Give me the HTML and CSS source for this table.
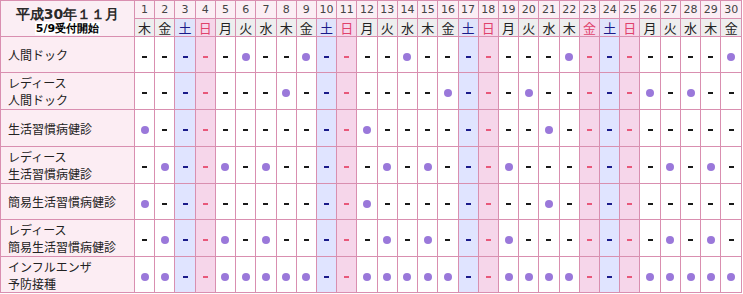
FILE: index.html
```html
<!DOCTYPE html>
<html lang="ja">
<head>
<meta charset="utf-8">
<title>平成30年11月</title>
<link rel="stylesheet" href="styles.css">
</head>
<body>
<table class="cal" id="cal">
  <thead>
    <tr class="nums" id="nums">
      <th class="corner" rowspan="2">
        <div class="month">平成30年１１月</div>
        <div class="start"><span>5/9受付開始</span></div>
      </th>
    </tr>
    <tr class="wdays" id="wdays"></tr>
  </thead>
  <tbody id="body"></tbody>
</table>
<script src="app.js"></script>
</body>
</html>
```

FILE: styles.css
```css
html, body {
  margin: 0;
  padding: 0;
  background: #ffffff;
}
body {
  font-family: "Noto Sans CJK JP", "Noto Sans", sans-serif;
  color: #222;
}
.cal {
  border-collapse: collapse;
  table-layout: fixed;
  width: 742px;
}
.cal th, .cal td {
  border: 1px solid #d98fb0;
  padding: 0;
  text-align: center;
  font-weight: normal;
}
.corner {
  width: 133px;
  background: #f2cbe0;
  vertical-align: top;
}
.month {
  font-size: 14px;
  line-height: 18px;
  font-weight: 700;
  color: #2a2a2a;
  margin-top: 4px;
}
.start {
  line-height: 12px;
  margin-top: 0;
}
.start span {
  font-size: 11px;
  font-weight: 700;
  background: #fff;
  color: #000;
  padding: 0 1px;
}
.nums th {
  height: 17px;
  font-family: "DejaVu Sans", sans-serif;
  font-size: 11px;
  line-height: 16px;
  background: #fbeef4;
  color: #444;
}
.wdays th {
  height: 17px;
  font-size: 13px;
  line-height: 16px;
  background: #eeeeee;
  color: #222;
}
.wdays th.sat {
  background: #e0e4fb;
  color: #1a1a8a;
}
.wdays th.sun {
  background: #f6d6e9;
  color: #e0426c;
}
.cal tbody td {
  background: #fff;
  font-size: 11px;
  color: #1a1a1a;
}
.cal tbody td.sat {
  background: #e0e4ff;
  color: #1a1a8a;
}
.cal tbody td.sun {
  background: #f6d6ea;
  color: #e8587a;
}
.cal tbody th.label {
  background: #fcedf3;
  text-align: left;
  padding-left: 7px;
  font-size: 12px;
  line-height: 17px;
  color: #222;
}
.row {
  height: 36px;
}
.row.tall {
  height: 37px;
}
.dot {
  display: inline-block;
  width: 8px;
  height: 8px;
  border-radius: 50%;
  background: #9a78da;
  vertical-align: middle;
}
.dash {
  display: inline-block;
  width: 5px;
  height: 2px;
  background: currentColor;
  vertical-align: middle;
}
```

FILE: app.js
```js
(function () {
  var wd = ["木","金","土","日","月","火","水"];
  var holidays = { 23: true };
  var nums = document.getElementById("nums");
  var wdays = document.getElementById("wdays");
  var body = document.getElementById("body");
  function kind(d) {
    var w = wd[(d - 1) % 7];
    if (w === "土") return "sat";
    if (w === "日" || holidays[d]) return "sun";
    return "";
  }
  for (var d = 1; d <= 30; d++) {
    var th = document.createElement("th");
    th.textContent = d;
    nums.appendChild(th);
    var th2 = document.createElement("th");
    th2.textContent = wd[(d - 1) % 7];
    var k = kind(d);
    if (k) th2.className = k;
    wdays.appendChild(th2);
  }
  var weekdays = [];
  for (var i = 1; i <= 30; i++) if (!kind(i)) weekdays.push(i);
  var rows = [
    { label: ["人間ドック"], dots: [6, 9, 14, 22, 30], tall: false },
    { label: ["レディース", "人間ドック"], dots: [8, 16, 20, 26, 28], tall: true },
    { label: ["生活習慣病健診"], dots: [1, 12, 21], tall: true },
    { label: ["レディース", "生活習慣病健診"], dots: [2, 5, 7, 13, 15, 19, 27, 29], tall: true },
    { label: ["簡易生活習慣病健診"], dots: [1, 12, 21], tall: false },
    { label: ["レディース", "簡易生活習慣病健診"], dots: [2, 5, 7, 13, 15, 19, 27, 29], tall: true },
    { label: ["インフルエンザ", "予防接種"], dots: weekdays, tall: false }
  ];
  rows.forEach(function (r) {
    var tr = document.createElement("tr");
    tr.className = "row" + (r.tall ? " tall" : "");
    var th = document.createElement("th");
    th.className = "label";
    r.label.forEach(function (t, idx) {
      if (idx) th.appendChild(document.createElement("br"));
      th.appendChild(document.createTextNode(t));
    });
    tr.appendChild(th);
    for (var d = 1; d <= 30; d++) {
      var td = document.createElement("td");
      var k = kind(d);
      if (k) td.className = k;
      var s = document.createElement("span");
      s.className = r.dots.indexOf(d) >= 0 && !k ? "dot" : "dash";
      td.appendChild(s);
      tr.appendChild(td);
    }
    body.appendChild(tr);
  });
})();
```
